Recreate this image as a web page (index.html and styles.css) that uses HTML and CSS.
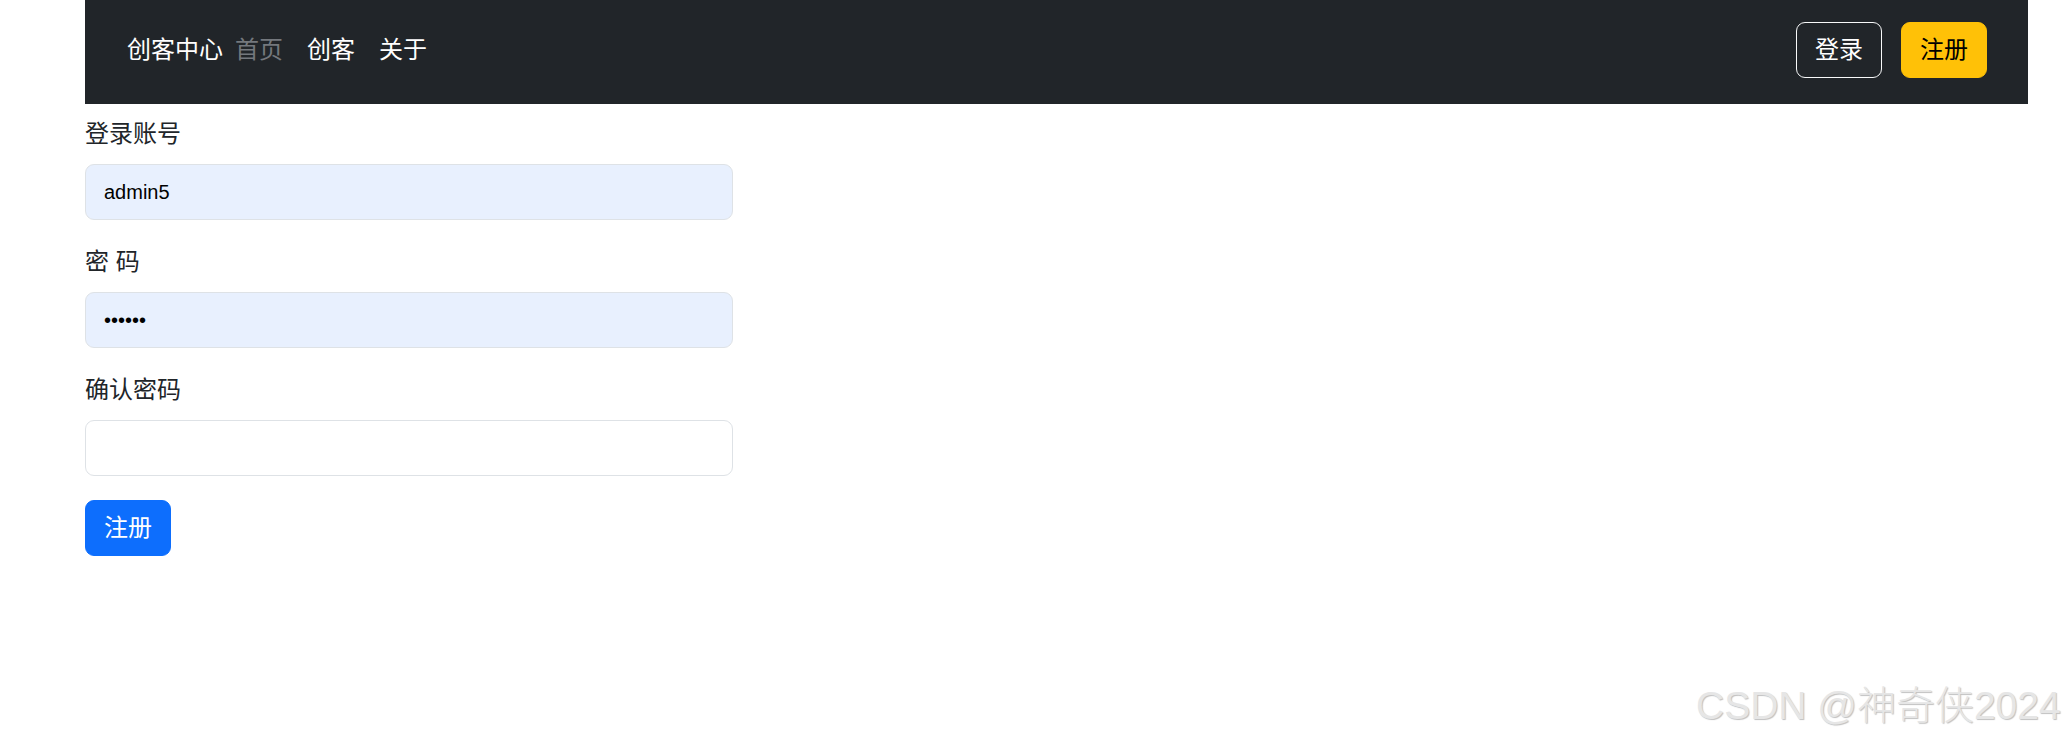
FILE: index.html
```html
<!DOCTYPE html>
<html lang="zh">
<head>
    <meta charset="UTF-8">
    <meta name="viewport" content="width=device-width, initial-scale=1.0">
    <title>注册 - 创客中心</title>
    <link rel="stylesheet" href="styles.css">
</head>
<body>

<div class="page">
    <nav class="navbar">
        <div class="nav-left">
            <a class="brand" href="#">创客中心</a>
            <a class="nav-link muted" href="#">首页</a>
            <a class="nav-link" href="#">创客</a>
            <a class="nav-link" href="#">关于</a>
        </div>
        <div class="nav-right">
            <button class="btn btn-outline">登录</button>
            <button class="btn btn-warning">注册</button>
        </div>
    </nav>

    <form class="reg-form">
        <div class="field">
            <label for="account">登录账号</label>
            <input type="text" id="account" class="form-control filled" value="admin5">
        </div>
        <div class="field">
            <label for="password">密 码</label>
            <input type="password" id="password" class="form-control filled" value="123456">
        </div>
        <div class="field">
            <label for="confirm">确认密码</label>
            <input type="password" id="confirm" class="form-control">
        </div>
        <button type="submit" class="btn btn-primary">注册</button>
    </form>
</div>

<div class="watermark">CSDN @神奇侠2024</div>

</body>
</html>
```

FILE: styles.css
```css
body {
    font-family: "Liberation Sans", "Noto Sans CJK SC", sans-serif;
    font-size: 24px;
    line-height: 36px;
    color: #212529;
    background: #fff;
    margin: 0;
}

.page {
    margin-left: 85px;
    width: 1943px;
}

.navbar {
    display: flex;
    align-items: center;
    justify-content: space-between;
    height: 104px;
    box-sizing: border-box;
    padding: 0 41px 4px 42px;
    background: #212529;
}

.nav-left {
    display: flex;
    align-items: center;
}

.brand {
    color: #fff;
    text-decoration: none;
}

.nav-link {
    color: #fff;
    text-decoration: none;
    padding: 0 12px;
}

.nav-link.muted {
    color: #74787d;
}

.nav-right {
    display: flex;
    gap: 19px;
}

.btn {
    font-family: inherit;
    font-size: 24px;
    line-height: 36px;
    padding: 9px 18px;
    border: 1px solid transparent;
    border-radius: 9px;
    cursor: pointer;
}

.btn-outline {
    background: transparent;
    color: #fff;
    border-color: #f8f9fa;
}

.btn-warning {
    background: #ffc107;
    border-color: #ffc107;
    color: #000;
}

.btn-primary {
    background: #0d6efd;
    border-color: #0d6efd;
    color: #fff;
}

.reg-form {
    width: 648px;
    padding-top: 12px;
}

.field {
    margin-bottom: 24px;
}

.field label {
    display: block;
    margin-bottom: 12px;
}

.form-control {
    display: block;
    width: 100%;
    box-sizing: border-box;
    height: 56px;
    padding: 9px 18px;
    font-family: "Liberation Sans", sans-serif;
    font-size: 20px;
    color: #000;
    background: #fff;
    border: 1px solid #dee2e6;
    border-radius: 9px;
    outline: none;
}

.form-control.filled {
    background: #e8f0fe;
}

.watermark {
    position: absolute;
    left: 1696px;
    top: 683px;
    font-family: "Liberation Sans", "Noto Sans CJK SC", sans-serif;
    font-size: 39px;
    line-height: 46px;
    font-weight: 300;
    color: #e6e6e6;
    text-shadow: 1px 1px 1px rgba(0, 0, 0, 0.25);
    white-space: nowrap;
}
```
